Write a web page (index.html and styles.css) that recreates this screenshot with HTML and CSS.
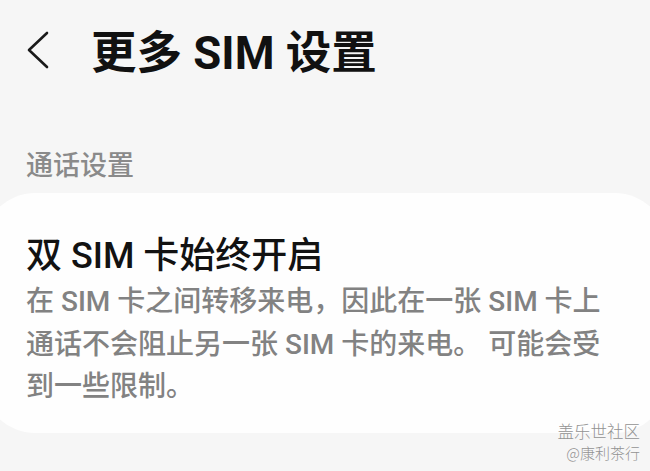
FILE: index.html
```html
<!DOCTYPE html>
<html lang="zh-CN">
<head>
<meta charset="utf-8">
<title>更多 SIM 设置</title>
<link rel="stylesheet" href="styles.css">
</head>
<body>
<div class="screen">
  <header class="topbar">
    <svg class="back" viewBox="0 0 24 40" width="24" height="40" aria-hidden="true">
      <path d="M21 3 L3 20 L21 37" fill="none" stroke="#1a1a1a" stroke-width="2.6" stroke-linecap="round" stroke-linejoin="round"/>
    </svg>
    <h1 class="title">更多 SIM 设置</h1>
  </header>
  <div class="section-label">通话设置</div>
  <div class="card">
    <div class="item-title">双 SIM 卡始终开启</div>
    <p class="item-desc"><span class="line">在 SIM 卡之间转移来电，因此在一张 SIM 卡上</span><span class="line">通话不会阻止另一张 SIM 卡的来电。 可能会受</span><span class="line">到一些限制。</span></p>
  </div>
  <div class="watermark">
    <span class="wm-line wm-big">盖乐世社区</span>
    <span class="wm-line">@康利茶行</span>
  </div>
</div>
</body>
</html>
```

FILE: styles.css
```css
* { box-sizing: border-box; }

html, body {
  margin: 0;
  padding: 0;
  background: #f6f6f6;
}

body {
  font-family: Roboto, "Noto Sans CJK SC", sans-serif;
  color: #141414;
  width: 650px;
  height: 471px;
  overflow: hidden;
}

.screen {
  position: relative;
  width: 650px;
  height: 471px;
  overflow: hidden;
}

.topbar {
  height: 108px;
  display: flex;
  align-items: center;
  padding-left: 26px;
}

.back {
  flex: none;
  display: block;
  margin-top: -8px;
}

.title {
  margin: 0 0 0 41px;
  font-size: 45.5px;
  line-height: 52px;
  font-weight: 700;
  color: #111;
  white-space: nowrap;
}

.section-label {
  margin-top: 38px;
  padding-left: 26px;
  font-size: 27px;
  line-height: 40px;
  font-weight: 500;
  color: #8a8a8a;
}

.card {
  margin: 7px -17px 0;
  background: #fefefe;
  border-radius: 52px;
  padding: 41px 44px 24px 43px;
}

.item-title {
  font-size: 36px;
  line-height: 44px;
  font-weight: 500;
  color: #121212;
  white-space: nowrap;
}

.item-desc {
  margin: 3px 0 0;
  font-size: 28px;
  line-height: 42.5px;
  font-weight: 500;
  color: #828282;
}

.line {
  display: block;
  white-space: nowrap;
}

.watermark {
  position: absolute;
  right: 10px;
  top: 420px;
  display: flex;
  flex-direction: column;
  align-items: flex-end;
  color: #929292;
  font-family: "Noto Sans CJK SC", sans-serif;
  font-weight: 300;
  text-shadow: 0 0 1px #fff;
}

.wm-line {
  font-size: 15px;
  line-height: 22px;
  white-space: nowrap;
}

.wm-big {
  font-size: 16.5px;
}
```
